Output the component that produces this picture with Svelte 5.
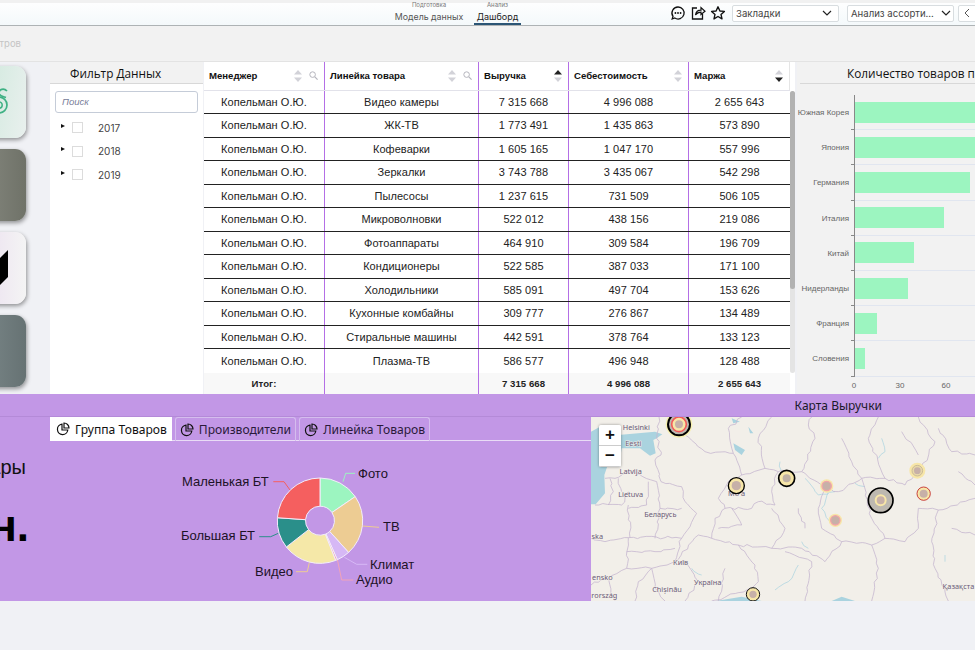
<script>
  const rows = [
    ['Видео камеры','7 315 668','4 996 088','2 655 643'],
    ['ЖК-ТВ','1 773 491','1 435 863','573 890'],
    ['Кофеварки','1 605 165','1 047 170','557 996'],
    ['Зеркалки','3 743 788','3 435 067','542 298'],
    ['Пылесосы','1 237 615','731 509','506 105'],
    ['Микроволновки','522 012','438 156','219 086'],
    ['Фотоаппараты','464 910','309 584','196 709'],
    ['Кондиционеры','522 585','387 033','171 100'],
    ['Холодильники','585 091','497 704','153 626'],
    ['Кухонные комбайны','309 777','276 867','134 489'],
    ['Стиральные машины','442 591','378 764','133 123'],
    ['Плазма-ТВ','586 577','496 948','128 488']
  ];
  const heads = [
    { t:'Менеджер', sort:'', search:true },
    { t:'Линейка товара', sort:'', search:true },
    { t:'Выручка', sort:'up', search:false },
    { t:'Себестоимость', sort:'', search:false },
    { t:'Маржа', sort:'down', search:false }
  ];
  const bars = [
    ['Южная Корея',130],['Япония',130],['Германия',115],['Италия',89],
    ['Китай',59],['Нидерланды',53],['Франция',22],['Словения',10]
  ];
  const cx = 270, cy = 79.7, R = 42.7, r = 14.5;
  const slices = [
    [0,55.6,'#9cf5c0'],[55.6,138,'#edcc93'],[138,156,'#d6b8f5'],[156,158.5,'#f2a3b8'],
    [158.5,232,'#f5e8a8'],[232,274,'#2a8f8a'],[274,360,'#f55f5f']
  ];
  function pt(rad, a) {
    const t = (a - 90) * Math.PI / 180;
    return (cx + rad * Math.cos(t)).toFixed(2) + ' ' + (cy + rad * Math.sin(t)).toFixed(2);
  }
  function arc(a, b) {
    const large = b - a > 180 ? 1 : 0;
    return `M${pt(r,a)} L${pt(R,a)} A${R} ${R} 0 ${large} 1 ${pt(R,b)} L${pt(r,b)} A${r} ${r} 0 ${large} 0 ${pt(r,a)} Z`;
  }
  const leaders = [
    ['293,40.7 295.7,32.3 305,32.3','#9cf5c0'],
    ['312.7,85 329,86.3','#edcc93'],
    ['294.3,116.3 306.7,123.3 317.3,123.3','#d6b8f5'],
    ['287.3,118.3 291.7,139 303.3,139','#f2a3b8'],
    ['259.3,121.7 257.3,130.7 246,130.7','#edcc93'],
    ['228.3,92.3 220.7,95.7 209.3,95.7','#2a8f8a'],
    ['240,49 234,40.7 223.3,40.7','#f55f5f']
  ];
  const pieLabels = [
    ['Фото',308,36.5],['ТВ',333,90],['Климат',320,127.5],['Аудио',306,142.5],
    ['Видео',205,134.5],['Большая БТ',131,98.5],['Маленькая БТ',132,44.5]
  ];
  const rawBorders = [
    'M222 66 L215 130 L228 180 L210 195 L228 260 L290 275 L300 320 L335 355 L315 395 L290 430 L240 428 L130 428',
    'M300 120 L360 170 L445 175 L470 240 L540 220 L580 230 L650 230 L690 130 L670 90 L680 66',
    'M470 240 L430 260 L400 310 L420 340 L390 370 L380 430 L460 450 L510 510 L520 560 L500 580',
    'M580 230 L560 290 L570 330 L520 320 L500 340 L420 340',
    'M560 340 L600 400 L560 460 L460 450',
    'M650 230 L720 280 L760 290 L830 250 L900 250 L960 270 L1010 220 L1050 140 L1000 66',
    'M720 280 L700 340 L710 400 L770 440 L720 500 L650 460 L560 460',
    'M770 440 L860 450 L900 430 L960 440 L1000 400 L1000 340 L1060 345 L1170 310',
    'M860 450 L880 520 L860 618',
    'M830 250 L860 370 L900 430',
    'M900 250 L850 130 L880 66',
    'M1060 345 L1040 440 L1050 520 L1090 618',
    'M770 130 L800 200 L830 250',
    'M1060 100 L1100 170 L1170 180',
    'M60 250 L90 250 L130 230 L215 260',
    'M30 330 L110 330 L130 290',
    'M130 330 L135 428',
    'M130 428 L125 520 L70 550 L18 570',
    'M290 430 L270 500 L200 520 L125 520',
    'M380 430 L340 420 L270 500',
    'M200 520 L210 580 L240 618',
    'M380 618 L500 580',
    'M600 470 L680 500 L660 618',
    'M75 250 L85 290 L70 330',
    'M100 250 L110 290',
    'M190 260 L185 330 L130 340',
    'M540 220 L520 130 L560 66',
    'M445 175 L430 100 L470 66',
    'M440 340 L470 390 L400 400',
    'M640 340 L660 400',
    'M950 110 L1000 180',
    'M1120 230 L1170 270',
    'M1100 400 L1170 420',
    'M18 430 L60 440 L130 428',
    'M215 260 L225 340 L290 340',
    'M225 340 L210 430',
    'M125 470 L210 470 L270 460',
    'M200 520 L160 560 L150 618',
    'M70 550 L90 618',
    'M300 500 L340 560 L300 618',
    'M420 520 L400 618'
  ];
  function wiggle(d) {
    let seed = d.length * 7 + 3;
    const rnd = () => {
      seed = (seed * 9301 + 49297) % 233280;
      return seed / 233280 - 0.5;
    };
    const pts = d.replace(/[ML]/g, ' ').trim().split(/\s+/).map(Number);
    let out = `M${pts[0]} ${pts[1]}`;
    for (let i = 2; i < pts.length; i += 2) {
      const x0 = pts[i - 2], y0 = pts[i - 1], x1 = pts[i], y1 = pts[i + 1];
      const steps = Math.max(1, Math.round(Math.hypot(x1 - x0, y1 - y0) / 14));
      for (let s = 1; s <= steps; s++) {
        const k = s / steps;
        const j = s === steps ? 0 : 9;
        out += ` L${(x0 + (x1 - x0) * k + rnd() * j).toFixed(1)} ${(y0 + (y1 - y0) * k + rnd() * j).toFixed(1)}`;
      }
    }
    return out;
  }
  const borders = rawBorders.map(wiggle);
  const rivers = [
    'M585 200 L590 235', 'M660 250 L700 300 L750 290', 'M730 290 L710 340 L735 380',
    'M650 440 L670 460', 'M640 510 L610 560 L570 585', 'M320 520 L350 540',
    'M890 130 L900 170 L880 190', 'M810 265 L840 275', 'M1080 480 L1080 500'
  ].map(wiggle);
  const mapLabels = [
    ['Helsinki',154,104],['Eesti',145,152],['Latvija',137,237],['Lietuva',137,306],
    ['Беларусь',226,366],['Київ',287,511],['Україна',368,570],['Chișinău',246,592],
    ['Қазақста',1120,582],['ska',37,431],['ensko',52,556],['rország',58,610],['Mo     a',455,302]
  ];
</script>

<div class="app">
  <header class="topbar">
    <nav class="modes">
      <div class="mode"><small>Подготовка</small><span>Модель данных</span></div>
      <div class="mode active"><small>Анализ</small><span>Дашборд</span></div>
    </nav>
    <div class="actions">
      <svg class="ic" viewBox="0 0 16 16" width="16" height="16"><path d="M8 2 a6 6 0 1 1 -3.2 11 L2.2 14 L3 11.4 A6 6 0 0 1 8 2 Z" fill="none" stroke="#111" stroke-width="1.3"/><circle cx="5.4" cy="8" r=".9"/><circle cx="8" cy="8" r=".9"/><circle cx="10.6" cy="8" r=".9"/></svg>
      <svg class="ic" viewBox="0 0 16 16" width="16" height="16"><path d="M7 3 H2.5 V14 H12.5 V9" fill="none" stroke="#111" stroke-width="1.3"/><path d="M5.5 10 C6 6.5 8 5.2 11 5.2 V2.5 L15 6.2 L11 9.5 V7.2 C8.5 7.2 7 8 5.5 10 Z" fill="none" stroke="#111" stroke-width="1.2"/></svg>
      <svg class="ic" viewBox="0 0 16 16" width="16" height="16"><path d="M8 1.8 L9.9 6 L14.4 6.4 L11 9.4 L12 13.9 L8 11.5 L4 13.9 L5 9.4 L1.6 6.4 L6.1 6 Z" fill="none" stroke="#111" stroke-width="1.4" stroke-linejoin="round"/></svg>
      <div class="select"><span>Закладки</span><svg viewBox="0 0 10 6" width="10" height="6"><path d="M1 1 L5 5 L9 1" fill="none" stroke="#222" stroke-width="1.2"/></svg></div>
      <div class="select second"><span>Анализ ассорти...</span><svg viewBox="0 0 10 6" width="10" height="6"><path d="M1 1 L5 5 L9 1" fill="none" stroke="#222" stroke-width="1.2"/></svg></div>
      <div class="back"><svg viewBox="0 0 6 10" width="6" height="10"><path d="M5 1 L1 5 L5 9" fill="none" stroke="#555" stroke-width="1"/></svg></div>
    </div>
  </header>

  <div class="toolbar"><span>Очистить фильтров</span></div>

  <main class="main">
    <aside class="tiles">
      <div class="tile green">
        <svg viewBox="0 0 10 27" width="10" height="27"><path d="M8 3 C5 0 0 1 0 5 C0 8 4 8.5 7 9.5" fill="none" stroke="#3fb184" stroke-width="1.7"/><circle cx="0" cy="17" r="8" fill="none" stroke="#3fb184" stroke-width="1.7"/><circle cx="0" cy="17" r="3.2" fill="none" stroke="#3fb184" stroke-width="1.5"/></svg>
      </div>
      <div class="tile olive"></div>
      <div class="tile pale">
        <svg viewBox="0 0 10 36" width="10" height="36"><path d="M0 9 L9 0 V27 L0 36 Z" fill="#000"/></svg>
      </div>
      <div class="tile slate"></div>
    </aside>

    <section class="filter">
      <h3>Фильтр Данных</h3>
      <div class="search">Поиск</div>
      <ul>
        {#each ['2017','2018','2019'] as y}
          <li>
            <i class="caret"></i>
            <i class="check"></i>
            <span>{y}</span>
          </li>
        {/each}
      </ul>
    </section>

    <section class="grid">
      <div class="row head">
        {#each heads as h}
          <div class="hcell">
            <b>{h.t}</b>
            <svg class="sort" viewBox="0 0 8 12" width="8" height="12">
              <path d="M4 0 L8 4.5 H0 Z" fill={h.sort === 'up' ? '#222' : '#d2d2d8'}/>
              <path d="M4 12 L8 7.5 H0 Z" fill={h.sort === 'down' ? '#222' : '#d2d2d8'}/>
            </svg>
            {#if h.search}
              <svg class="find" viewBox="0 0 9 9" width="9" height="9"><circle cx="3.6" cy="3.6" r="2.8" fill="none" stroke="#b5b5bd" stroke-width="1"/><path d="M5.8 5.8 L8.6 8.6" stroke="#b5b5bd" stroke-width="1.2"/></svg>
            {/if}
          </div>
        {/each}
      </div>
      <div class="body">
        {#each rows as r}
          <div class="row line">
            <div class="cell">Копельман О.Ю.</div>
            {#each r as v}<div class="cell">{v}</div>{/each}
          </div>
        {/each}
        <div class="bar"><i></i></div>
      </div>
      <div class="row total">
        <div class="cell">Итог:</div><div class="cell"></div>
        <div class="cell">7 315 668</div><div class="cell">4 996 088</div><div class="cell">2 655 643</div>
      </div>
    </section>

    <section class="chart">
      <h3>Количество товаров по странам</h3>
      <div class="plot">
        {#each bars as b}
          <div class="brow">
            <span class="blabel">{b[0]}</span>
            <div class="btrack"><i style="width:{b[1]}px"></i></div>
          </div>
        {/each}
        <div class="axis"><span>0</span><span>30</span><span>60</span></div>
      </div>
    </section>
  </main>

  <section class="band">
    <div class="band-head"><span>Карта Выручки</span></div>
    <div class="band-body">
      <div class="kpi">
        <div class="kpi-a">Товары</div>
        <div class="kpi-b">3 млн.</div>
      </div>
      <div class="tabs-wrap">
        <div class="tabs">
          {#each ['Группа Товаров','Производители','Линейка Товаров'] as t, i}
            <div class="tab" class:on={i === 0}>
              <svg viewBox="0 0 14 14" width="14" height="14"><path d="M6 2.2 A5.2 5.2 0 1 0 11.8 8 H6 Z" fill="none" stroke="#111" stroke-width="1.2"/><path d="M8 1 A5 5 0 0 1 13 6 H8 Z" fill="none" stroke="#111" stroke-width="1.2"/></svg>
              <span>{t}</span>
            </div>
          {/each}
        </div>
        <svg class="pie" viewBox="0 0 541 160" width="541" height="160">
          {#each leaders as l}
            <polyline points={l[0]} fill="none" stroke={l[1]} stroke-width="1"/>
          {/each}
          {#each slices as s}
            <path d={arc(s[0], s[1])} fill={s[2]} stroke="#f3ecfb" stroke-width="1"/>
          {/each}
          {#each pieLabels as p}
            <text x={p[1]} y={p[2]}>{p[0]}</text>
          {/each}
        </svg>
      </div>
      <div class="map">
        <svg viewBox="18 66 1152 552" width="384" height="184">
          <rect x="18" y="66" width="1152" height="552" fill="#f2efe9"/>
          <path d="M18 110 L45 95 L60 125 L100 120 L210 110 L232 118 L215 130 L205 135 L212 175 L195 182 L165 160 L110 160 L105 195 L70 205 L58 240 L60 295 L32 328 L18 328 Z" fill="#aad3df"/>
          <path d="M440 70 L465 80 L445 85 Z M445 145 L480 165 L470 180 L450 165 Z M490 95 L505 115 L495 115 Z M380 620 L470 605 L530 618 Z M740 618 L770 605 L810 618 Z" fill="#aad3df"/>
          {#each rivers as d}<path {d} fill="none" stroke="#aad3df" stroke-width="2.2"/>{/each}
          {#each borders as d}<path {d} fill="none" stroke="#c4b4cf" stroke-width="2.3" stroke-linejoin="round"/>{/each}
          {#each mapLabels as m}<text x={m[1]} y={m[2]}>{m[0]}</text>{/each}
          <g>
            <circle cx="282" cy="88" r="40" fill="#f7f0b0"/><circle cx="282" cy="88" r="33" fill="#bdb8b0" stroke="#000" stroke-width="6"/><circle cx="282" cy="88" r="22" fill="#f7e6a8" stroke="#f25a5a" stroke-width="5"/><circle cx="282" cy="88" r="12" fill="#c7b0a8"/>
            <circle cx="454" cy="272" r="24" fill="#f7e6a8" stroke="#000" stroke-width="4"/><circle cx="454" cy="272" r="14" fill="#c7b0a8"/>
            <circle cx="605" cy="250" r="24" fill="#f7e6a8" stroke="#000" stroke-width="5"/><circle cx="605" cy="250" r="12" fill="#bfb0a5"/>
            <circle cx="725" cy="273" r="20" fill="#f7e6a8"/><circle cx="725" cy="273" r="14" fill="#c7b0a8" stroke="#f2a3a8" stroke-width="4"/>
            <circle cx="751" cy="376" r="20" fill="#f7e6a8"/><circle cx="751" cy="376" r="14" fill="#c7b0a8" stroke="#f2a3a8" stroke-width="4"/>
            <circle cx="887" cy="316" r="37" fill="#bdb8b0" stroke="#000" stroke-width="5"/><circle cx="887" cy="316" r="15" fill="#c7b0a8" stroke="#f7e6a8" stroke-width="6"/>
            <circle cx="997" cy="227" r="24" fill="#f7e6a8"/><circle cx="997" cy="227" r="16" fill="#e8d8a8" stroke="#b8a890" stroke-width="2"/><circle cx="997" cy="227" r="10" fill="#c7b0a8"/>
            <circle cx="1016" cy="296" r="20" fill="#f7e6a8" stroke="#c02020" stroke-width="2.5"/><circle cx="1016" cy="296" r="12" fill="#c7b0a8"/>
            <circle cx="504" cy="598" r="20" fill="#f7e6a8" stroke="#111" stroke-width="3"/><circle cx="504" cy="598" r="11" fill="#c7b0a8"/>
          </g>
        </svg>
        <div class="zoom"><button>+</button><button>−</button></div>
      </div>
    </div>
  </section>
</div>

<style>
  :global(body) { margin: 0; background: #f0f1f5; }
  * { box-sizing: border-box; }
  .app { width: 975px; height: 650px; overflow: hidden; background: #f0f1f5; font-family: "Liberation Sans", Arial, sans-serif; color: #111; }

  .topbar { height: 26px; display: flex; align-items: stretch; padding-top: 1px; background: linear-gradient(#ffffff, #f4f9fb); border-bottom: 1px solid #aeb3b5; box-shadow: inset 0 3px 0 #f1f1f1; }
  .modes { display: flex; margin-left: 391px; gap: 7px; }
  .mode { display: flex; flex-direction: column; align-items: center; padding: 0 2px; width: 76px; font-family: Inter, sans-serif; color: #555; }
  .mode.active { width: 47px; color: #222; border-bottom: 2px solid #2b5575; height: 24px; }
  .mode small { font-size: 6px; line-height: 7px; color: #777; white-space: nowrap; }
  .mode span { font-size: 8.8px; line-height: 12px; margin-top: 3px; white-space: nowrap; }
  .mode.active span { font-size: 9px; }
  .actions { margin-left: auto; display: flex; align-items: center; height: 24px; }
  .ic { margin-right: 4px; fill: #111; }
  .select { width: 107px; height: 17px; margin-left: 2px; padding: 0 6px 0 3px; display: flex; align-items: center; justify-content: space-between; background: #fff; border: 1px solid #d8dde0; border-radius: 2px; font-family: Inter, sans-serif; font-size: 9.6px; color: #444; white-space: nowrap; }
  .select.second { margin-left: 8px; padding-right: 2px; }
  .back { width: 22px; height: 17px; margin-left: 4px; margin-right: -5px; padding-left: 5px; display: flex; align-items: center; background: #fff; border: 1px solid #d8dde0; border-radius: 2px; }

  .toolbar { height: 36px; background: #f2f2f2; border-bottom: 1px solid #e3e3e3; display: flex; justify-content: flex-end; overflow: hidden; width: 100%; }
  .toolbar span { margin-right: 954px; padding-top: 12px; font-family: Inter, sans-serif; font-size: 9.5px; color: #c4c4c4; white-space: nowrap; }

  .main { height: 332px; display: flex; }
  .tiles { width: 50px; padding: 4px 0 0; display: flex; flex-direction: column; gap: 11.5px; overflow: hidden; flex: none; }
  .tile { width: 66px; height: 71.5px; margin-left: -40px; flex: none; border-radius: 11px; box-shadow: 1px 2px 4px rgba(0,0,0,.4); display: flex; align-items: center; justify-content: flex-end; padding-right: 17px; }
  .green { background: linear-gradient(100deg, #c6e6d6, #e9f0ee); }
  .olive { background: linear-gradient(90deg, #8e9088, #6f7268); }
  .pale { background: linear-gradient(90deg, #e7d6ee, #f4f4f4); }
  .slate { background: linear-gradient(90deg, #839092, #667273); }

  .filter { width: 153px; background: #fff; flex: none; }
  .filter h3 { margin: 0; height: 22px; padding-left: 20px; background: #f2f2f2; border-bottom: 1px solid #d8d8d8; font: 400 11.8px/22px "Open Sans", sans-serif; color: #111; }
  .search { margin: 7px 5px 0; height: 22px; padding-left: 6px; border: 1px solid #c5ccd8; border-radius: 3px; font: italic 9.5px/20px "Liberation Sans", sans-serif; color: #79809a; }
  .filter ul { margin: 3px 0 0; padding: 0; list-style: none; }
  .filter li { height: 23.5px; display: flex; align-items: center; font: 10px Inter, sans-serif; color: #444; }
  .caret { width: 0; height: 0; margin: -4px 6px 0 11px; border-left: 4px solid #111; border-top: 2.5px solid transparent; border-bottom: 2.5px solid transparent; }
  .check { width: 11px; height: 11px; border: 1px solid #dcdcdc; background: #fff; margin-right: 15px; margin-left: 1px; }

  .grid { width: 591px; margin-left: 1px; flex: none; background: #fff; display: flex; flex-direction: column; position: relative; }
  .row { display: grid; grid-template-columns: 121px 154px 90px 120px 101px; }
  .head { height: 28.5px; width: 586px; background: #fff; border-bottom: 1px solid #e2e2ea; }
  .hcell { display: flex; align-items: center; padding: 0 5px; border-right: 1px solid #b46fe6; font-size: 9.6px; }
  .hcell:last-child { border-right: 1px solid #e5e5e5; }
  .hcell b { margin-right: auto; white-space: nowrap; color: #111; }
  .sort { margin-left: 4px; }
  .find { margin-left: 7px; margin-right: 1px; }
  .hcell:nth-child(n+3) .sort { margin-right: 1px; }
  .body { display: flex; flex-direction: column; position: relative; height: 282px; width: 591px; }
  .line { height: 23.5px; flex: none; border-bottom: 1.5px solid #222; width: 586px; }
  .line:nth-last-child(2) { border-bottom: none; }
  .cell { display: flex; align-items: center; justify-content: center; border-right: 1px solid #b46fe6; font-size: 11px; letter-spacing: .06px; color: #222; white-space: nowrap; }
  .line .cell:last-child { border-right: none; }
  .bar { position: absolute; right: 0; top: 0; bottom: 0; width: 5px; border-radius: 3px; background: #e4e4e4; }
  .bar i { display: block; height: 198px; border-radius: 3px; background: #b2b2b2; }
  .total { height: 21.5px; width: 586px; background: #f8f8f8; }
  .total .cell { font-size: 9.6px; font-weight: 700; color: #222; }
  .total .cell:last-child { border-right: none; }

  .chart { flex: 1; margin-left: 2px; min-width: 0; overflow: hidden; background: #f2f2f2; }
  .chart h3 { margin: 0 0 0 3px; height: 22px; border-bottom: 1px solid #d8d8d8; padding-left: 47px; font: 400 11.8px/22px "Open Sans", sans-serif; color: #111; white-space: nowrap; }
  .plot { padding-top: 11px; }
  .brow { height: 35.2px; display: flex; align-items: center; }
  .blabel { width: 52px; flex: none; text-align: right; font-size: 8px; color: #666; white-space: nowrap; margin-right: 5px; }
  .btrack { flex: 1; height: 35.2px; display: flex; align-items: center; border-left: 1px solid #888; border-bottom: 1px solid #e1e6f0; position: relative; }
  .btrack::before { content: ""; position: absolute; left: -4px; bottom: -1px; width: 4px; height: 1px; background: #888; }
  .btrack i { display: block; height: 21px; background: #9cf5c0; flex: none; }
  .axis { display: flex; margin-left: 34px; padding-top: 4px; font-size: 8px; color: #666; }
  .axis span { width: 46px; flex: none; text-align: center; }

  .band { height: 207px; background: #c297e6; }
  .band-head { height: 23px; display: flex; justify-content: flex-end; padding-right: 93px; border-bottom: 1px solid #b48ad8; font: 12px/24px "Noto Sans", sans-serif; color: #1a1a2a; }
  .band-body { display: flex; height: 184px; }
  .kpi { width: 50px; flex: none; overflow: hidden; display: flex; flex-direction: column; align-items: flex-end; padding-right: 24px; }
  .kpi-a { font-size: 20px; line-height: 20px; margin-top: 40px; white-space: nowrap; color: #111; }
  .kpi-b { font-size: 44px; font-weight: 700; line-height: 40px; margin-top: 29px; margin-right: -3px; white-space: nowrap; color: #000; }
  .tabs-wrap { width: 541px; flex: none; }
  .tabs { height: 24px; display: flex; gap: 3px; border-bottom: 1px solid #e9dcf6; }
  .tab { display: flex; align-items: center; gap: 5px; padding: 0 4px; height: 24px; border: 1px solid #d5bdee; border-bottom: none; border-radius: 3px 3px 0 0; font: 12.1px "Noto Sans", sans-serif; color: #2a1a3a; white-space: nowrap; }
  .tab.on { background: #fff; border: none; border-radius: 0; color: #111; padding: 0 5px 0 6px; }
  .pie { display: block; }
  .pie text { font-size: 13px; fill: #1c1226; }
  .map { width: 384px; flex: none; position: relative; overflow: hidden; }
  .map svg { display: block; }
  .map text { font: 22px "Noto Sans", sans-serif; fill: #6b5b78; text-anchor: middle; stroke: #f2efe9; stroke-width: 3px; paint-order: stroke; }
  .zoom { position: absolute; left: 8px; top: 8px; width: 22px; display: flex; flex-direction: column; box-shadow: 0 0 3px rgba(0,0,0,.4); border-radius: 2px; overflow: hidden; }
  .zoom button { width: 22px; height: 21px; padding: 0; border: none; border-bottom: 1px solid #ccc; background: #fff; font: 700 17px/20px "Liberation Sans", sans-serif; color: #111; }
</style>
